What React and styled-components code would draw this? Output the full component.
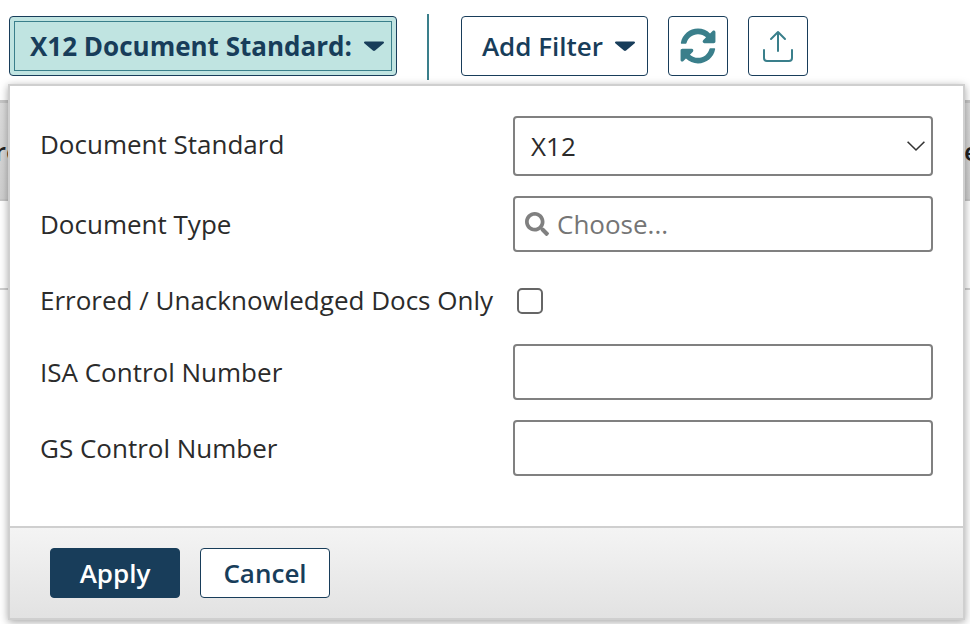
import styled, { createGlobalStyle } from "styled-components"

const Global = createGlobalStyle`
html, body {
  margin: 0;
  padding: 0;
  background: #fff;
  font-family: "Open Sans", "Noto Sans", sans-serif;
}
* { box-sizing: border-box; }
`

const Page = styled.div`
position: relative;
width: 970px;
height: 624px;
overflow: hidden;
background: #fff;
`

const Toolbar = styled.div`
display: flex;
align-items: center;
height: 92px;
padding: 0 0 0 9px;
`

const ChipButton = styled.button`
position: relative;
display: flex;
align-items: center;
justify-content: ${({ $active }) => ($active ? "flex-start" : "center")};
width: ${({ $width }) => $width}px;
height: 60px;
margin-right: ${({ $gap }) => $gap || 0}px;
padding: 0 0 0 ${({ $pad }) => $pad || 0}px;
background: ${({ $active }) => ($active ? "#c0e4e1" : "#fff")};
border: 1px solid #183d5a;
border-radius: 4px;
color: #183d5a;
font-family: inherit;
font-size: 26px;
font-weight: ${({ $active }) => ($active ? 700 : 600)};
&::after {
  content: "";
  display: ${({ $active }) => ($active ? "block" : "none")};
  position: absolute;
  inset: 4px;
  border: 1px solid #3a7f8b;
}
`

const Caret = styled.svg`
width: 20px;
height: 10px;
margin-left: 12px;
flex: none;
`

const Divider = styled.div`
width: 2px;
height: 66px;
margin: 2px 32px 0 0;
background: #3a7f8b;
`

const Table = styled.div`
color: #222;
font-size: 26px;
`

const HeadRow = styled.div`
display: flex;
justify-content: space-between;
align-items: center;
height: 101px;
margin-top: 8px;
overflow: hidden;
background: linear-gradient(#dcdcdc, #cfcfcf);
border-top: 3px solid #c6c6c6;
border-bottom: 2px solid #c6c6c6;
font-weight: 600;
`

const LeftCell = styled.span`
margin-left: -31px;
`

const RightCell = styled.span`
margin-right: -9px;
`

const BodyRow = styled.div`
height: 89px;
border-bottom: 2px solid #d0d0d0;
`

const Popover = styled.div`
position: absolute;
left: 8px;
top: 84px;
display: flex;
flex-direction: column;
width: 957px;
height: 536px;
background: #fff;
border: 2px solid #cfcfcf;
box-shadow: 0 2px 8px rgba(0, 0, 0, 0.35);
`

const Form = styled.div`
flex: 1;
padding: 30px 30px 0 30px;
`

const Row = styled.div`
display: flex;
align-items: center;
height: ${({ $height }) => $height}px;
margin-bottom: ${({ $gap }) => $gap || 0}px;
`

const Label = styled.label`
width: 473px;
flex: none;
margin-top: ${({ $shift }) => $shift || 0}px;
color: #2b2b2b;
font-size: 26px;
line-height: 34px;
`

const Field = styled.div`
display: flex;
align-items: center;
width: 420px;
height: 100%;
padding: 0 ${({ $pad }) => $pad || 10}px;
border: 2px solid #808080;
border-radius: 4px;
background: #fff;
color: #2b2b2b;
font-size: 26px;
`

const Grow = styled.span`
flex: 1;
`

const Placeholder = styled.span`
margin-left: 8px;
color: #757575;
`

const Checkbox = styled.span`
display: block;
width: 26px;
height: 26px;
margin-left: 4px;
border: 2px solid #666;
border-radius: 5px;
background: #fff;
`

const Footer = styled.div`
display: flex;
gap: 20px;
height: 92px;
padding: 20px 0 0 40px;
border-top: 2px solid #cfcfcf;
background: linear-gradient(#f4f4f4, #e2e2e2);
`

const FooterButton = styled.button`
width: 130px;
height: 50px;
padding: 0;
background: ${({ $primary }) => ($primary ? "#183d5a" : "#fff")};
color: ${({ $primary }) => ($primary ? "#fff" : "#183d5a")};
border: 1px solid #183d5a;
border-radius: 4px;
font-family: inherit;
font-size: 26px;
font-weight: 600;
`

const Chevron = styled.svg`
width: 18px;
height: 12px;
margin-right: -10px;
`

const CaretIcon = () => (
  <Caret viewBox="0 0 20 10">
    <path d="M1 0.5h18a1 1 0 0 1 .7 1.7l-8.6 7.3a1.7 1.7 0 0 1-2.2 0L.3 2.2A1 1 0 0 1 1 .5z" fill="#183d5a" />
  </Caret>
)

const RefreshIcon = () => (
  <svg width="36" height="36" viewBox="0 0 512 512">
    <path
      fill="#3a7f8b"
      d="M370.72 133.28C339.458 104.008 298.888 87.962 255.848 88c-77.458.068-144.328 53.178-162.791 126.85-1.344 5.363-6.122 9.15-11.651 9.15H24.103c-7.498 0-13.194-6.807-11.807-14.176C33.933 94.924 134.813 8 256 8c66.448 0 126.791 26.136 171.315 68.685L463.03 40.97C478.149 25.851 504 36.559 504 57.941V192c0 13.255-10.745 24-24 24H345.941c-21.382 0-32.09-25.851-16.971-40.971l41.75-41.749zM32 296h134.059c21.382 0 32.09 25.851 16.971 40.971l-41.75 41.75c31.262 29.273 71.835 45.319 114.876 45.28 77.418-.07 144.315-53.144 162.787-126.849 1.344-5.363 6.122-9.15 11.651-9.15h57.304c7.498 0 13.194 6.807 11.807 14.176C478.067 417.076 377.187 504 256 504c-66.448 0-126.791-26.136-171.315-68.685L48.97 471.03C33.851 486.149 8 475.441 8 454.059V320c0-13.255 10.745-24 24-24z"
    />
  </svg>
)

const UploadIcon = () => (
  <svg width="32" height="34" viewBox="0 0 32 34" fill="none" stroke="#3a7f8b" strokeWidth="2" strokeLinecap="round" strokeLinejoin="round">
    <path d="M16 22V3M9 10l7-7 7 7" />
    <path d="M2 21v8a3 3 0 0 0 3 3h22a3 3 0 0 0 3-3v-8" />
  </svg>
)

const SearchIcon = () => (
  <svg width="24" height="24" viewBox="0 0 512 512">
    <path
      fill="#808080"
      d="M505 442.7L405.3 343c-4.5-4.5-10.6-7-17-7H372c27.6-35.3 44-79.7 44-128C416 93.1 322.9 0 208 0S0 93.1 0 208s93.1 208 208 208c48.3 0 92.7-16.4 128-44v16.3c0 6.4 2.5 12.5 7 17l99.7 99.7c9.4 9.4 24.6 9.4 33.9 0l28.3-28.3c9.4-9.4 9.4-24.6.1-34zM208 336c-70.7 0-128-57.2-128-128 0-70.7 57.2-128 128-128 70.7 0 128 57.2 128 128 0 70.7-57.2 128-128 128z"
    />
  </svg>
)

const ChevronIcon = () => (
  <Chevron viewBox="0 0 18 12" fill="none" stroke="#333" strokeWidth="1.6">
    <path d="M0.6 1.8L9 10l8.4-8.2" />
  </Chevron>
)

const App = () => {
  return (
    <Page>
      <Global />
      <Toolbar>
        <ChipButton $active $pad={20} $width={388} $gap={30}>
          X12 Document Standard:
          <CaretIcon />
        </ChipButton>
        <Divider />
        <ChipButton $pad={8} $width={187} $gap={20}>
          Add Filter
          <CaretIcon />
        </ChipButton>
        <ChipButton $width={60} $gap={20}>
          <RefreshIcon />
        </ChipButton>
        <ChipButton $width={60}>
          <UploadIcon />
        </ChipButton>
      </Toolbar>
      <Table>
        <HeadRow>
          <LeftCell>Error</LeftCell>
          <RightCell>Type</RightCell>
        </HeadRow>
        <BodyRow />
      </Table>
      <Popover>
        <Form>
          <Row $height={60} $gap={20}>
            <Label $shift={-4}>Document Standard</Label>
            <Field $pad={16}>
              <Grow>X12</Grow>
              <ChevronIcon />
            </Field>
          </Row>
          <Row $height={56} $gap={36}>
            <Label>Document Type</Label>
            <Field>
              <SearchIcon />
              <Placeholder>Choose...</Placeholder>
            </Field>
          </Row>
          <Row $height={26} $gap={30}>
            <Label $shift={-2}>Errored / Unacknowledged Docs Only</Label>
            <Checkbox />
          </Row>
          <Row $height={56} $gap={20}>
            <Label>ISA Control Number</Label>
            <Field />
          </Row>
          <Row $height={56}>
            <Label>GS Control Number</Label>
            <Field />
          </Row>
        </Form>
        <Footer>
          <FooterButton $primary>Apply</FooterButton>
          <FooterButton>Cancel</FooterButton>
        </Footer>
      </Popover>
    </Page>
  )
}

export default App
